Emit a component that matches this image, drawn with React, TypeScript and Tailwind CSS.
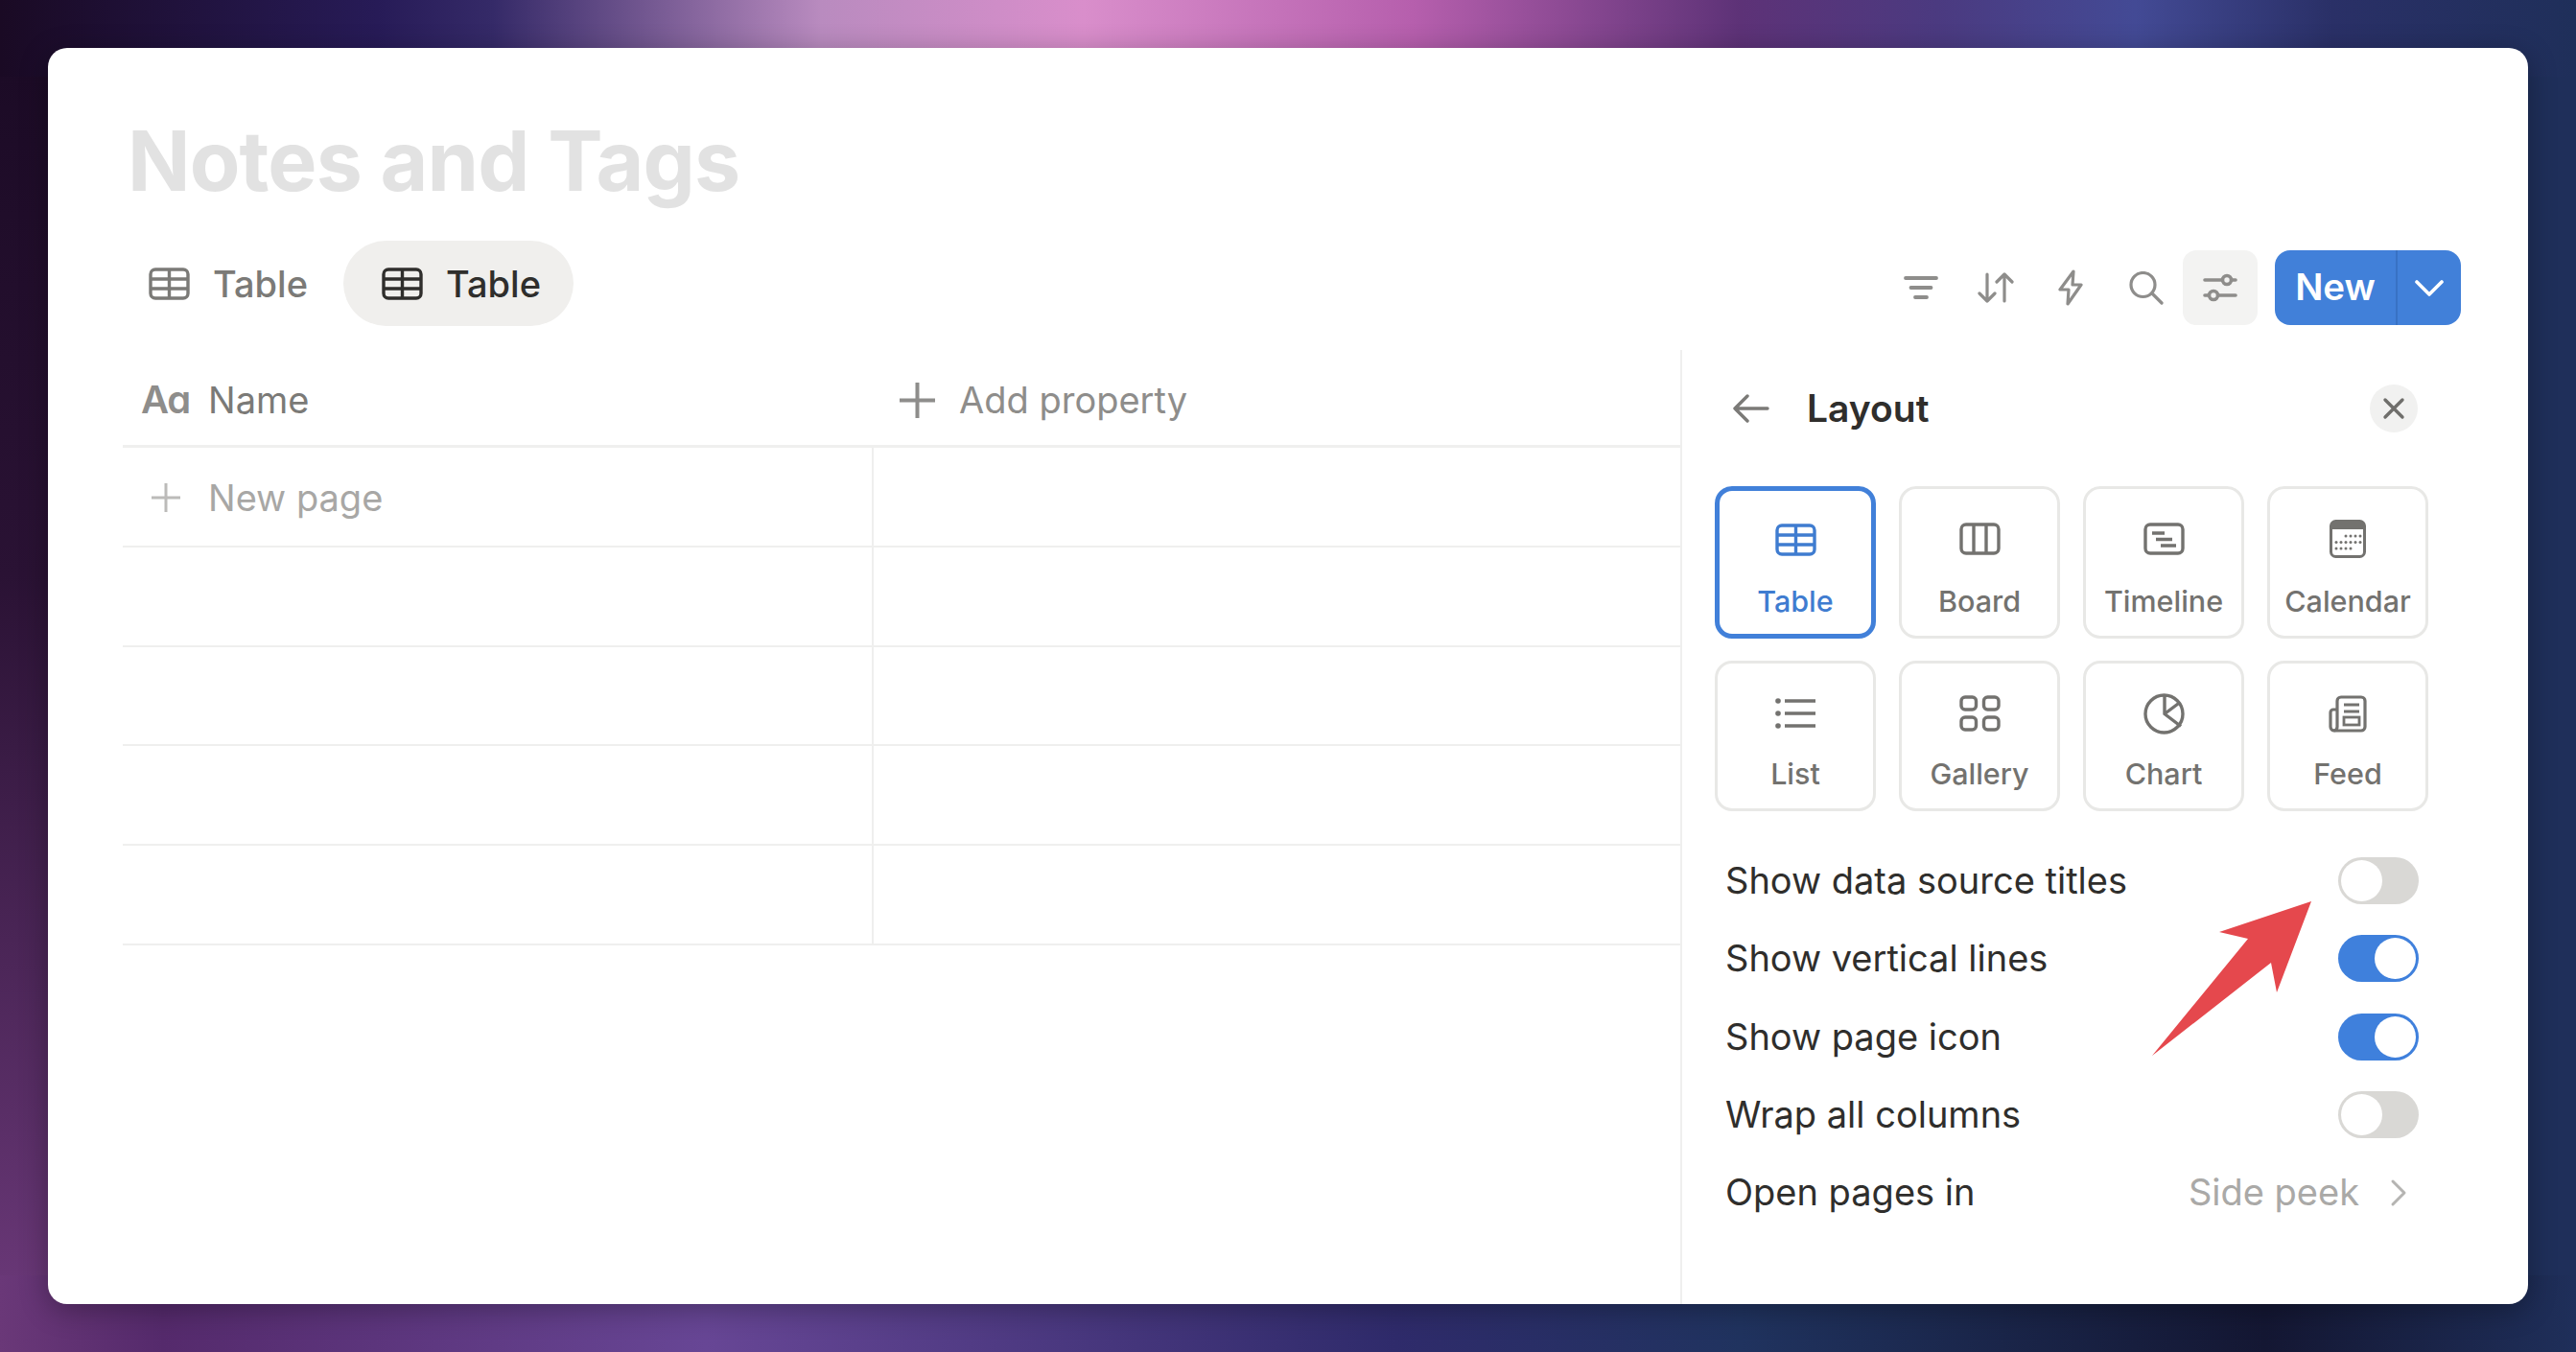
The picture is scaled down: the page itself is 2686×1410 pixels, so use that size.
const font = { fontFamily: 'Inter, "Noto Sans", sans-serif' }

function TableIcon({ className = '' }: { className?: string }) {
    return (
        <svg width="43" height="34" viewBox="0 0 43 34" fill="none" stroke="currentColor" strokeWidth="3.4" className={className}>
            <rect x="2" y="2" width="39" height="30" rx="5" />
            <path d="M2 12h39M2 22h39M21.5 2v30" />
        </svg>
    )
}

function LayoutIcon({ name }: { name: string }) {
    if (name === 'Table') return <TableIcon />
    if (name === 'Board') {
        return (
            <svg width="43" height="34" viewBox="0 0 43 34" fill="none" stroke="currentColor" strokeWidth="3.4">
                <rect x="2" y="2" width="39" height="30" rx="5" />
                <path d="M15 2v30M28 2v30" />
            </svg>
        )
    }
    if (name === 'Timeline') {
        return (
            <svg width="43" height="34" viewBox="0 0 43 34" fill="none" stroke="currentColor" strokeWidth="3.4">
                <rect x="2" y="2" width="39" height="30" rx="5" />
                <path d="M9 11h13M13 17.500h17M18 24h16" />
            </svg>
        )
    }
    if (name === 'Calendar') {
        return (
            <svg width="38" height="40" viewBox="0 0 38 40" fill="none">
                <rect x="1.500" y="1.500" width="35" height="37" rx="5" stroke="currentColor" strokeWidth="3" />
                <path d="M1 10V6a5 5 0 0 1 5-5h26a5 5 0 0 1 5 5v4z" fill="currentColor" />
                <g fill="currentColor">
                    <circle cx="17" cy="17" r="1.500" /><circle cx="22" cy="17" r="1.500" /><circle cx="27" cy="17" r="1.500" /><circle cx="32" cy="17" r="1.500" />
                    <circle cx="7" cy="23.500" r="1.500" /><circle cx="12" cy="23.500" r="1.500" /><circle cx="17" cy="23.500" r="1.500" /><circle cx="22" cy="23.500" r="1.500" /><circle cx="27" cy="23.500" r="1.500" /><circle cx="32" cy="23.500" r="1.500" />
                    <circle cx="7" cy="30" r="1.500" /><circle cx="12" cy="30" r="1.500" /><circle cx="17" cy="30" r="1.500" /><circle cx="22" cy="30" r="1.500" />
                </g>
            </svg>
        )
    }
    if (name === 'List') {
        return (
            <svg width="43" height="34" viewBox="0 0 43 34" fill="none" stroke="currentColor" strokeWidth="3.4">
                <path d="M10 4h32M10 17h32M10 30h32" />
                <g fill="currentColor" stroke="none">
                    <circle cx="3" cy="4" r="2.800" /><circle cx="3" cy="17" r="2.800" /><circle cx="3" cy="30" r="2.800" />
                </g>
            </svg>
        )
    }
    if (name === 'Gallery') {
        return (
            <svg width="43" height="38" viewBox="0 0 43 38" fill="none" stroke="currentColor" strokeWidth="3.4">
                <rect x="2" y="2" width="15.500" height="13" rx="4" />
                <rect x="25.500" y="2" width="15.500" height="13" rx="4" />
                <rect x="2" y="23" width="15.500" height="13" rx="4" />
                <rect x="25.500" y="23" width="15.500" height="13" rx="4" />
            </svg>
        )
    }
    if (name === 'Chart') {
        return (
            <svg width="43" height="43" viewBox="0 0 43 43" fill="none" stroke="currentColor" strokeWidth="3.400">
                <circle cx="21.500" cy="21.500" r="19.500" />
                <path d="M22 2v19.500l17 13M22 21.500l16-12" />
            </svg>
        )
    }
    return (
        <svg width="40" height="39" viewBox="0 0 40 39" fill="none" stroke="currentColor" strokeWidth="3.200">
            <path d="M9 33V6a4 4 0 0 1 4-4h21a4 4 0 0 1 4 4v27a4 4 0 0 1-4 4H6a4 4 0 0 1-4-4V18a3 3 0 0 1 3-3h4" />
            <path d="M9 33a4 4 0 0 1-3.500 4" />
            <path d="M16 10h16M16 17h16" />
            <rect x="16" y="23" width="16" height="8" strokeWidth="2.800" />
        </svg>
    )
}

function ToolIcon({ name }: { name: string }) {
    if (name === 'filter') {
        return (
            <svg width="36" height="26" viewBox="0 0 36 26" fill="none" stroke="currentColor" strokeWidth="3.800" strokeLinecap="round">
                <path d="M2 3h32M7.500 13h21M12 23h12" />
            </svg>
        )
    }
    if (name === 'sort') {
        return (
            <svg width="38" height="32" viewBox="0 0 38 32" fill="none" stroke="currentColor" strokeWidth="3.200" strokeLinecap="round" strokeLinejoin="round">
                <path d="M10 2v28M2 22l8 8 8-8" />
                <path d="M28 30V2M20 10l8-8 8 8" />
            </svg>
        )
    }
    if (name === 'bolt') {
        return (
            <svg width="26" height="38" viewBox="0 0 26 38" fill="none" stroke="currentColor" strokeWidth="3.200" strokeLinejoin="round">
                <path d="M16 2 2 21h9l-1 15 14-20h-9z" />
            </svg>
        )
    }
    if (name === 'search') {
        return (
            <svg width="36" height="35" viewBox="0 0 36 35" fill="none" stroke="currentColor" strokeWidth="3.200" strokeLinecap="round" className="ml-[2px]">
                <circle cx="14.500" cy="14" r="12.500" />
                <path d="m24 23 10 10" />
            </svg>
        )
    }
    return (
        <svg width="36" height="30" viewBox="0 0 36 30" fill="none" stroke="currentColor" strokeWidth="3.600" strokeLinecap="round">
            <path d="M2 7h18M30 7h4M2 23h4M16 23h18" />
            <circle cx="25" cy="7" r="4.500" />
            <circle cx="11" cy="23" r="4.500" />
        </svg>
    )
}

function Toggle({ on }: { on: boolean }) {
    return (
        <div className={`w-[84px] h-[49px] rounded-full p-[3px] flex ${on ? 'bg-[#3f80dc] justify-end' : 'bg-[#d9d8d5] justify-start'}`}>
            <div className="w-[43px] h-[43px] rounded-full bg-white" />
        </div>
    )
}

const layouts = ['Table', 'Board', 'Timeline', 'Calendar', 'List', 'Gallery', 'Chart', 'Feed']
const tools = ['filter', 'sort', 'bolt', 'search', 'sliders']
const settings = [
    { label: 'Show data source titles', on: false },
    { label: 'Show vertical lines', on: true },
    { label: 'Show page icon', on: true },
    { label: 'Wrap all columns', on: false },
]

export default function App() {
    return (
        <div
            style={font}
            className="relative w-full h-[1410px] p-[50px] overflow-hidden [background:linear-gradient(90deg,#1a0a24_0,#271b57_394px,#352a68_514px,#b98bbf_856px,#d98ecb_1130px,#b65fad_1473px,#5d3277_1815px,#4b3a80_2020px,#434a95_2226px,#2a3067_2431px,#1f2f5a_2686px)_top/100%_80px_no-repeat,linear-gradient(90deg,#6a3878_0,#552a6c_170px,#674695_736px,#2f2b6b_1455px,#20335f_1815px,#141733_2362px,#1f2f5a_2686px)_bottom/100%_80px_no-repeat,linear-gradient(180deg,#1a0a24_0,#2a1234_600px,#6a3878_1360px)_left/80px_100%_no-repeat,#1f2f5a]"
        >
            <div className="w-full h-full bg-white rounded-[20px] flex flex-col shadow-[0_6px_30px_rgba(0,0,0,0.3)] overflow-hidden">
                <div className="h-[168px] pl-[83px] flex items-end shrink-0">
                    <h1 className="text-[86px] leading-[100px] font-bold text-[#e2e2e2] tracking-[-0.01em]">Notes and Tags</h1>
                </div>

                <div className="h-[147px] shrink-0 pl-[84px] pr-[70px] pt-[33px] flex justify-between items-start">
                    <div className="flex items-center gap-[16px] h-[89px]">
                        <div className="h-[89px] px-[21px] flex items-center gap-[24px] text-[#7b7a77]">
                            <TableIcon />
                            <span className="text-[38px] font-medium mt-[2px]">Table</span>
                        </div>
                        <div className="h-[89px] pl-[40px] pr-[34px] flex items-center gap-[24px] rounded-full bg-[#f0efed] text-[#2f2e2c]">
                            <TableIcon />
                            <span className="text-[38px] font-medium mt-[2px]">Table</span>
                        </div>
                    </div>

                    <div className="flex items-center gap-[18px] mt-[10px]">
                        <div className="flex text-[#8e8d8b]">
                            {tools.map((t) => (
                                <div key={t} className={`w-[78px] h-[78px] flex items-center justify-center rounded-[14px] ${t === 'sliders' ? 'bg-[#f3f3f2]' : ''}`}>
                                    <ToolIcon name={t} />
                                </div>
                            ))}
                        </div>
                        <div className="h-[78px] w-[194px] flex rounded-[16px] bg-[#4180d9] text-white">
                            <div className="w-[128px] flex items-center justify-center text-[38.5px] font-semibold border-r-2 border-[#3872c4]">New</div>
                            <div className="flex-1 flex items-center justify-center">
                                <svg width="30" height="18" viewBox="0 0 30 18" fill="none" stroke="currentColor" strokeWidth="3.600" strokeLinecap="round" strokeLinejoin="round">
                                    <path d="m2 3 13 13L28 3" />
                                </svg>
                            </div>
                        </div>
                    </div>
                </div>

                <div className="flex-1 flex min-h-0">
                    <div className="w-[1702px] pl-[78px] shrink-0">
                        <div className="h-[102px] pt-[5px] flex items-center border-b-[3px] border-[#efefee] text-[#7b7a77]">
                            <div className="w-[783px] flex items-center">
                                <span className="w-[89px] pl-[19px] text-[40px] font-semibold text-[#8e8d8b] [font-feature-settings:'cv11'] tracking-[-0.03em]">Aa</span>
                                <span className="text-[38px]">Name</span>
                            </div>
                            <div className="flex items-center pl-[27px] gap-[25px] text-[#8e8d8b]">
                                <svg width="37" height="37" viewBox="0 0 37 37" fill="none" stroke="currentColor" strokeWidth="4">
                                    <path d="M18.500 0v37M0 18.500h37" />
                                </svg>
                                <span className="text-[38px]">Add property</span>
                            </div>
                        </div>
                        {[0, 1, 2, 3, 4].map((i) => (
                            <div key={i} className="h-[103.8px] flex border-b-2 border-[#efefee]">
                                <div className="w-[783px] h-full border-r-2 border-[#efefee] flex items-center text-[#a8a7a5] pt-[3px]">
                                    {i === 0 && (
                                        <>
                                            <div className="w-[89px] pl-[30px]">
                                                <svg width="30" height="30" viewBox="0 0 30 30" fill="none" stroke="#bcbbb9" strokeWidth="3">
                                                    <path d="M15 0v30M0 15h30" />
                                                </svg>
                                            </div>
                                            <span className="text-[38px]">New page</span>
                                        </>
                                    )}
                                </div>
                            </div>
                        ))}
                    </div>

                    <div className="flex-1 border-l-2 border-[#efefee] pl-[34px]">
                        <div className="h-[122px] flex items-center pl-[19px] pr-[115px] justify-between">
                            <div className="flex items-center gap-[39px]">
                                <svg width="38" height="32" viewBox="0 0 38 32" fill="none" stroke="#7b7a77" strokeWidth="3.400" strokeLinecap="round" strokeLinejoin="round">
                                    <path d="M2 16h34M15 3 2 16l13 13" />
                                </svg>
                                <span className="text-[39px] font-semibold text-[#2f2e2c]">Layout</span>
                            </div>
                            <div className="w-[50px] h-[50px] rounded-full bg-[#f1f1f0] flex items-center justify-center">
                                <svg width="24" height="24" viewBox="0 0 24 24" fill="none" stroke="#6f6e6b" strokeWidth="3.400" strokeLinecap="round">
                                    <path d="m3 3 18 18M21 3 3 21" />
                                </svg>
                            </div>
                        </div>

                        <div className="mt-[20px] grid grid-cols-[repeat(4,168px)] grid-rows-[159px_157px] gap-x-[24px] gap-y-[23px]">
                            {layouts.map((l, i) => (
                                <div
                                    key={l}
                                    className={`rounded-[18px] flex flex-col items-center ${l === 'Table' ? 'border-[5px] border-[#4180d9] text-[#3f7cd0]' : 'border-[3px] border-[#e8e8e6] text-[#73726f]'}`}
                                >
                                    <div className={`flex items-center justify-center shrink-0 pt-[20px] ${l === 'Table' ? 'h-[82px]' : 'h-[84px]'}`}>
                                        <LayoutIcon name={l} />
                                    </div>
                                    <span className={`text-[30.5px] leading-[40px] font-medium ${i < 4 ? 'mt-[13px]' : 'mt-[11px]'}`}>{l}</span>
                                </div>
                            ))}
                        </div>

                        <div className="mt-[32px] w-[734px] pl-[11px]">
                            {settings.map((s) => (
                                <div key={s.label} className="h-[81.3px] flex items-center justify-between text-[38px] text-[#2f2e2c]">
                                    <span>{s.label}</span>
                                    <Toggle on={s.on} />
                                </div>
                            ))}
                            <div className="h-[81.3px] flex items-center justify-between text-[38px] text-[#2f2e2c]">
                                <span>Open pages in</span>
                                <div className="flex items-center gap-[32px] pr-[12px] text-[#aaa9a7]">
                                    <span>Side peek</span>
                                    <svg width="18" height="30" viewBox="0 0 18 30" fill="none" stroke="#b5b4b2" strokeWidth="3" strokeLinecap="round" strokeLinejoin="round">
                                        <path d="m3 3 12 12L3 27" />
                                    </svg>
                                </div>
                            </div>
                        </div>
                    </div>
                </div>
            </div>

            <svg width="180" height="175" viewBox="0 0 180 175" className="absolute left-[2240px] top-[935px]">
                <path d="M170 5 74 37l30 7L4 166 128 69l6 31z" fill="#e5484d" />
            </svg>
        </div>
    )
}
